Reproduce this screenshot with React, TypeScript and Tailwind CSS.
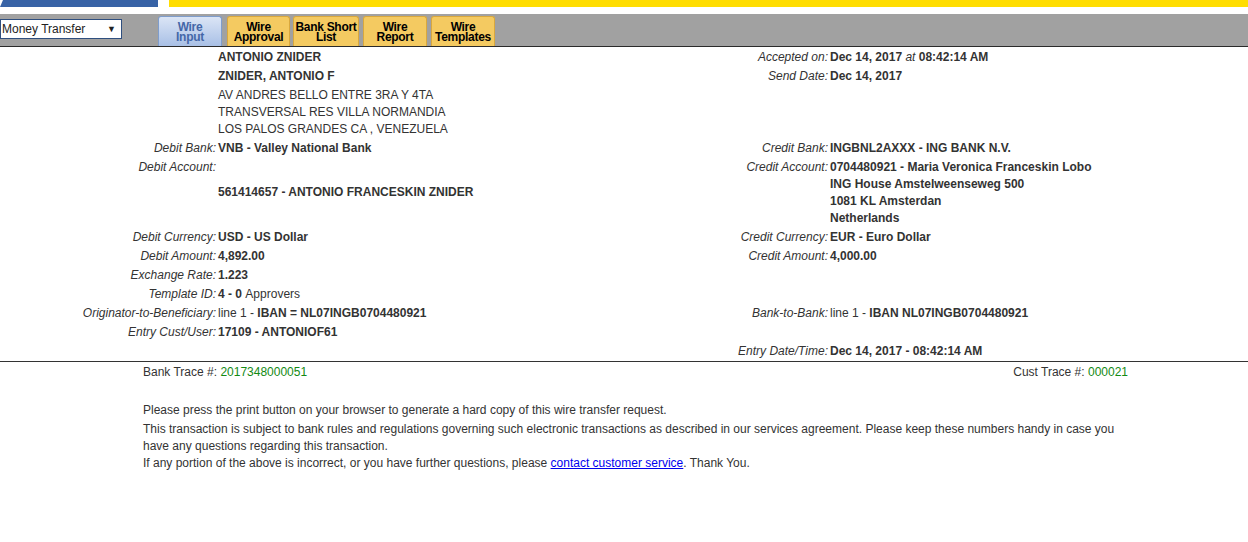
import React from "react";

const LBL = "text-right italic whitespace-nowrap pr-[2px] py-px";
const VAL = "pl-0 py-px font-bold whitespace-nowrap";

function Tab({ top, bottom, w, active }: { top: string; bottom: string; w: string; active?: boolean }) {
  return (
    <div
      className={
        (active
          ? "rounded-t-[3px] border border-b-0 border-[#7f9dcc] bg-gradient-to-b from-[#dbe5f5] to-[#a9c0e6] text-[#4467a8]"
          : "rounded-t-[3px] border border-b-0 border-[#d9a83d] bg-[#f4ca61] text-black") +
        " h-[30px] flex flex-col items-center justify-center text-[12px] font-bold leading-[10px] whitespace-nowrap tracking-[-0.3px] pt-px " +
        w
      }
    >
      <span>{top}</span>
      <span>{bottom}</span>
    </div>
  );
}

export default function App() {
  return (
    <div className="w-[1248px] h-[542px] bg-white text-[#333] text-[12px] leading-[17px] font-['Liberation_Sans',Arial,sans-serif]">
      {/* top colour bars */}
      <div className="flex h-[7px]">
        <div className="w-[158px] bg-[#3863a6] [clip-path:polygon(3px_0,100%_0,100%_100%,0_100%)]" />
        <div className="w-[11px]" />
        <div className="flex-1 bg-[#ffdd00]" />
      </div>
      <div className="h-[7px]" />

      {/* nav bar */}
      <div className="h-[33px] bg-[#a1a1a1] border-b border-[#2a2a2a] flex items-end">
        <div className="self-start mt-[5px] w-[122px] h-[20px] bg-white border border-[#2f4f7f] flex items-center justify-between pl-px pr-[5px] text-[12px] text-[#222]">
          <span>Money Transfer</span>
          <span className="text-[9px]">▼</span>
        </div>
        <div className="ml-[36px] flex">
          <Tab top="Wire" bottom="Input" w="w-[64px]" active />
          <Tab top="Wire" bottom="Approval" w="w-[63px] ml-[5px]" />
          <Tab top="Bank Short" bottom="List" w="w-[66px] ml-[3px]" />
          <Tab top="Wire" bottom="Report" w="w-[64px] ml-[4px]" />
          <Tab top="Wire" bottom="Templates" w="w-[64px] ml-[4px]" />
        </div>
      </div>

      {/* detail grid */}
      <div className="grid grid-cols-[218px_394px_218px_1fr] border-b border-[#333] pt-px">
        <div className={LBL} />
        <div className={VAL}>ANTONIO ZNIDER</div>
        <div className={LBL}>Accepted on:</div>
        <div className={VAL}>
          Dec 14, 2017 <span className="italic font-normal">at</span> 08:42:14 AM
        </div>

        <div className={LBL} />
        <div className={VAL}>ZNIDER, ANTONIO F</div>
        <div className={LBL}>Send Date:</div>
        <div className={VAL}>Dec 14, 2017</div>

        <div className={LBL} />
        <div className="py-px">
          <div>AV ANDRES BELLO ENTRE 3RA Y 4TA</div>
          <div>TRANSVERSAL RES VILLA NORMANDIA</div>
          <div>LOS PALOS GRANDES CA , VENEZUELA</div>
        </div>
        <div className={LBL} />
        <div />

        <div className={LBL}>Debit Bank:</div>
        <div className={VAL}>VNB - Valley National Bank</div>
        <div className={LBL}>Credit Bank:</div>
        <div className={VAL}>INGBNL2AXXX - ING BANK N.V.</div>

        <div className={LBL}>Debit Account:</div>
        <div className={VAL + " self-center -mt-px"}>561414657 - ANTONIO FRANCESKIN ZNIDER</div>
        <div className={LBL}>Credit Account:</div>
        <div className={VAL}>
          <div>0704480921 - Maria Veronica Franceskin Lobo</div>
          <div>ING House Amstelweenseweg 500</div>
          <div>1081 KL Amsterdan</div>
          <div>Netherlands</div>
        </div>

        <div className={LBL}>Debit Currency:</div>
        <div className={VAL}>USD - US Dollar</div>
        <div className={LBL}>Credit Currency:</div>
        <div className={VAL}>EUR - Euro Dollar</div>

        <div className={LBL}>Debit Amount:</div>
        <div className={VAL}>4,892.00</div>
        <div className={LBL}>Credit Amount:</div>
        <div className={VAL}>4,000.00</div>

        <div className={LBL}>Exchange Rate:</div>
        <div className={VAL}>1.223</div>
        <div className={LBL} />
        <div />

        <div className={LBL}>Template ID:</div>
        <div className={VAL}>
          4 - 0 <span className="font-normal">Approvers</span>
        </div>
        <div className={LBL} />
        <div />

        <div className={LBL}>Originator-to-Beneficiary:</div>
        <div className={VAL}>
          <span className="font-normal">line 1 - </span>IBAN = NL07INGB0704480921
        </div>
        <div className={LBL}>Bank-to-Bank:</div>
        <div className={VAL}>
          <span className="font-normal">line 1 - </span>IBAN NL07INGB0704480921
        </div>

        <div className={LBL}>Entry Cust/User:</div>
        <div className={VAL}>17109 - ANTONIOF61</div>
        <div className={LBL} />
        <div />

        <div className={LBL} />
        <div />
        <div className={LBL}>Entry Date/Time:</div>
        <div className={VAL}>Dec 14, 2017 - 08:42:14 AM</div>
      </div>

      {/* trace numbers and notes */}
      <div className="ml-[143px] w-[985px]">
        <div className="flex justify-between pt-[2px] pb-px">
          <span>
            Bank Trace #: <span className="text-[#138a13]">2017348000051</span>
          </span>
          <span>
            Cust Trace #: <span className="text-[#138a13]">000021</span>
          </span>
        </div>
        <p className="mt-[20px] mb-[2px]">
          Please press the print button on your browser to generate a hard copy of this wire transfer request.
        </p>
        <p>
          This transaction is subject to bank rules and regulations governing such electronic transactions as
          described in our services agreement. Please keep these numbers handy in case you have any questions
          regarding this transaction.
        </p>
        <p>
          If any portion of the above is incorrect, or you have further questions, please{" "}
          <a href="#" className="text-[#0000ee] underline">
            contact customer service
          </a>
          . Thank You.
        </p>
      </div>
    </div>
  );
}
